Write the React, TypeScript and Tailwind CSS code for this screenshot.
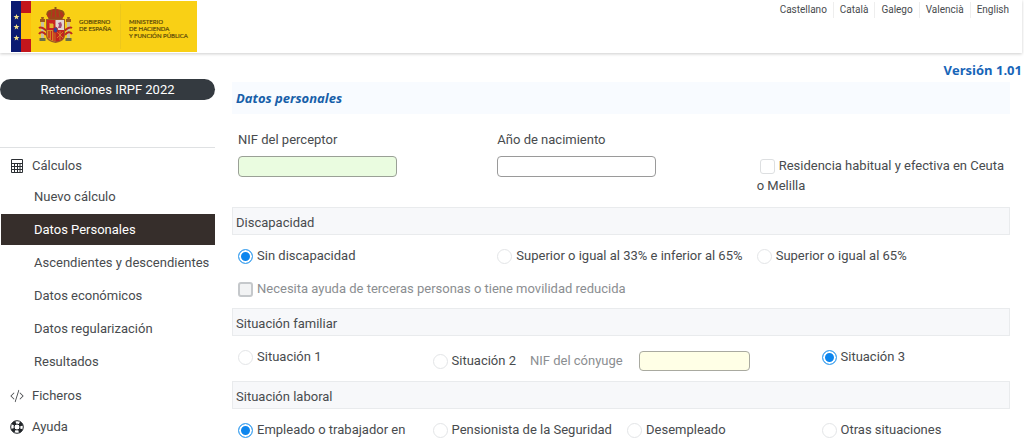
import type { ReactNode } from "react";
import { BsCodeSlash } from "react-icons/bs";

const languages = ["Castellano", "Català", "Galego", "Valencià", "English"];

const calculos = [
  "Nuevo cálculo",
  "Datos Personales",
  "Ascendientes y descendientes",
  "Datos económicos",
  "Datos regularización",
  "Resultados",
];

function Star({ y }: { y: number }) {
  return (
    <path
      transform={`translate(5.5 ${y})`}
      fill="#f4e08a"
      d="M0-3 .8-.9 3-.9 1.2.5 1.8 2.6 0 1.3-1.8 2.6-1.2.5-3-.9-.8-.9z"
    />
  );
}

function Logo() {
  return (
    <svg width="186" height="51" viewBox="0 0 186 51" role="img" aria-label="Gobierno de España">
      <rect width="186" height="51" fill="#f9d015" />
      <rect width="10" height="51" fill="#0b1a72" />
      <rect x="10" width="10" height="12" fill="#c3161c" />
      <rect x="10" y="12" width="10" height="26" fill="#fdc30c" />
      <rect x="10" y="38" width="10" height="13" fill="#c3161c" />
      <Star y={16} />
      <Star y={26} />
      <Star y={37} />

      {/* pillars */}
      <g fill="#c9bfa0">
        <rect x="30" y="20" width="3" height="18" />
        <rect x="56" y="20" width="3" height="18" />
      </g>
      <g fill="#9c5a1c">
        <path d="M29 18h5v3h-5zM55 18h5v3h-5z" />
        <path d="M30 16h3l-.5 2h-2zM56 16h3l-.5 2h-2z" />
      </g>
      <g fill="#6b7046">
        <rect x="28.500" y="37" width="6" height="3" />
        <rect x="54.500" y="37" width="6" height="3" />
      </g>
      <g fill="none" stroke="#bb2a20" strokeWidth="2">
        <path d="M28 27c3-2 5 1 8 3M28 33c2-3 5-2 7 1M61 27c-3-2-5 1-8 3M61 33c-2-3-5-2-7 1" />
      </g>
      {/* crown */}
      <path d="M36 15c-2-5 3-7 8.500-7s10.500 2 8.500 7l-2 3H38z" fill="#b3331d" />
      <path
        d="M36 14c0-4 3-5 5-4l-1 6M53 14c0-4-3-5-5-4l1 6M44.500 8v8M37 17h15"
        fill="none"
        stroke="#8a5b14"
        strokeWidth="1.200"
      />
      <path d="M43.500 6h2v3h-2z" fill="#8a5b14" />
      {/* shield */}
      <path d="M35 18h19v16c0 5-4 7-9.500 8-5.500-1-9.500-3-9.500-8z" fill="#9d5a24" />
      <path d="M36 19h8.500v10H36z" fill="#cb2420" />
      <path d="M44.500 19H53v10h-8.500z" fill="#e3d4d2" />
      <path d="M36 29h8.500v11.500C39 40 36 37 36 34z" fill="#d88b24" />
      <path d="M44.500 29H53v5c0 3-3 6-8.500 6.500z" fill="#c3221f" />
      <path d="M38 30v7M40.500 30v9M43 30v10" stroke="#c3221f" strokeWidth="1.200" />
      <path d="M38.500 27v-5h1v1h1v-1h1v1h1v4z" fill="#e4b52e" />
      <path d="M47 27l1-3-1-2 3-1 1 3-1 3z" fill="#a34c77" />
      <path d="M46 31l6 6M52 31l-6 6M49 30v9" stroke="#d99a28" strokeWidth=".7" />
      <ellipse cx="44.500" cy="29" rx="2.200" ry="2.800" fill="#33458f" stroke="#c3221f" strokeWidth=".8" />

      <path d="M109.500 3v45" stroke="#edc71c" strokeWidth="1" />
      <g fill="#5d4b0a" stroke="#5d4b0a" strokeWidth=".2" fontFamily="Lato, sans-serif" fontSize="6">
        <text x="68" y="23">GOBIERNO</text>
        <text x="68" y="30">DE ESPAÑA</text>
        <text x="118" y="23">MINISTERIO</text>
        <text x="118" y="30">DE HACIENDA</text>
        <text x="118" y="37">Y FUNCIÓN PÚBLICA</text>
      </g>
    </svg>
  );
}

function CalculatorIcon() {
  return (
    <svg width="14" height="14" viewBox="0 0 14 14" fill="none" stroke="#2b2f33" aria-hidden="true">
      <path d="M1.500 .5h11v13h-11zM1.500 4.500h11" />
      <path d="M1.500 7.500h11M1.500 10.500h11M4.500 4.500v9M7.500 4.500v9M10 4.500v9" />
    </svg>
  );
}

function LifeRingIcon() {
  return (
    <svg width="14" height="14" viewBox="0 0 14 14" fill="none" stroke="#212529" aria-hidden="true">
      <circle cx="7" cy="7" r="6.300" />
      <circle cx="7" cy="7" r="3" />
      <circle cx="7" cy="7" r="4.700" strokeWidth="3.400" strokeDasharray="3.690 3.690" strokeDashoffset="-1.850" />
    </svg>
  );
}

function SectionBar({ children }: { children: ReactNode }) {
  return (
    <h3 className="flex h-7 items-center border border-[#e9ebed] bg-[#f7f8fa] px-[3px] pt-[3px]">{children}</h3>
  );
}

type OptionProps = {
  name: string;
  label: string;
  checked?: boolean;
};

function Radio({ name, label, checked }: OptionProps) {
  return (
    <label className="flex items-center gap-1 whitespace-nowrap">
      <input
        type="radio"
        name={name}
        defaultChecked={checked}
        className="size-[15px] shrink-0 appearance-none rounded-full border border-[#e3e5e7] bg-white checked:border-[#4aa8f0] checked:bg-[#0d86ee] checked:shadow-[inset_0_0_0_2px_white]"
      />
      {label}
    </label>
  );
}

function Sidebar() {
  return (
    <aside className="w-[21%] shrink-0 pt-[25px]">
      <h1 className="flex h-[21px] items-center justify-center rounded-full bg-[#343a40] text-white">
        Retenciones IRPF 2022
      </h1>
      <nav className="mt-[47px] border-t border-[#dfe1e3] pt-2">
        <a href="#calculos" className="flex h-5 items-center gap-2 pl-[10px]">
          <CalculatorIcon />
          Cálculos
        </a>
        <ul className="flex flex-col gap-0.5 pt-[5px]">
          {calculos.map((item) => (
            <li key={item}>
              <a
                href="#datos"
                className={
                  item === "Datos Personales"
                    ? "ml-px flex h-[31px] items-center whitespace-nowrap bg-[#362e2b] pl-[33px] text-white"
                    : "ml-px flex h-[31px] items-center whitespace-nowrap pl-[33px]"
                }
              >
                {item}
              </a>
            </li>
          ))}
        </ul>
        <a href="#ficheros" className="mt-[9px] flex h-5 items-center gap-2 pl-[10px]">
          <BsCodeSlash size={14} />
          Ficheros
        </a>
        <a href="#ayuda" className="mt-[11px] flex h-5 items-center gap-2 pl-[10px]">
          <LifeRingIcon />
          Ayuda
        </a>
      </nav>
    </aside>
  );
}

export default function App() {
  return (
    <div className="bg-white font-[Roboto,'Noto_Sans',sans-serif] text-[13px] leading-5 text-[#484b4e]">
      <header className="mr-0.5 flex h-[53px] items-start justify-between pl-[11px] pr-[7px] pt-px shadow-[0_1px_3px_rgba(0,0,0,0.2)]">
        <Logo />
        <ul className="flex pt-px text-[10px] leading-4">
          {languages.map((lang) => (
            <li key={lang} className="border-l border-[#eeeeee] px-[6px] first:border-l-0">
              <a href="#idioma">{lang}</a>
            </li>
          ))}
        </ul>
      </header>

      <div className="flex pt-px">
        <Sidebar />
        <main className="ml-[17px] min-w-0 flex-1">
          <p className="pr-[2px] pt-[6px] text-right font-['Open_Sans','Noto_Sans',sans-serif] font-bold text-[#1765b8]">
            Versión 1.01
          </p>
          <form className="mr-[14px]">
            <h2 className="mt-[2px] flex h-8 items-center bg-[#f8fbff] px-1 font-['Open_Sans','Noto_Sans',sans-serif] font-bold italic text-[#175fa9]">
              Datos personales
            </h2>

            <div className="grid h-[93px] grid-cols-3 pt-4">
              <div className="pl-[6px]">
                <label htmlFor="nif" className="block">NIF del perceptor</label>
                <input
                  id="nif"
                  className="mt-[6px] block h-[21px] w-[159px] rounded border border-[#9aa096] bg-[#eafce0] px-1"
                />
              </div>
              <div className="pl-[6px]">
                <label htmlFor="nacimiento" className="block">Año de nacimiento</label>
                <input
                  id="nacimiento"
                  className="mt-[6px] block h-[21px] w-[159px] rounded border border-[#9a9a9a] bg-white px-1"
                />
              </div>
              <label className="block pl-[6px] pt-[26px]">
                <input
                  type="checkbox"
                  className="ml-[3px] mr-1 inline-block size-[15px] appearance-none rounded-[3px] border border-[#dddfe1] bg-white align-middle"
                />
                Residencia habitual y efectiva en Ceuta o Melilla
              </label>
            </div>

            <SectionBar>Discapacidad</SectionBar>
            <div className="grid grid-cols-3 pt-[11px]">
              <div className="pl-[6px]">
                <Radio name="discapacidad" label="Sin discapacidad" checked />
              </div>
              <div className="pl-[6px]">
                <Radio name="discapacidad" label="Superior o igual al 33% e inferior al 65%" />
              </div>
              <div className="pl-[6px]">
                <Radio name="discapacidad" label="Superior o igual al 65%" />
              </div>
            </div>
            <label className="mb-[9px] mt-[13px] flex items-center gap-1 pl-[6px] text-[#8b8e91]">
              <input
                type="checkbox"
                disabled
                className="size-[15px] appearance-none rounded-[3px] border-2 border-[#c5c8cb] bg-[#f2f3f4]"
              />
              Necesita ayuda de terceras personas o tiene movilidad reducida
            </label>

            <SectionBar>Situación familiar</SectionBar>
            <div className="grid h-[45px] grid-cols-4 pt-[11px]">
              <div className="pl-[6px]">
                <Radio name="familiar" label="Situación 1" />
              </div>
              <div className="col-span-2 flex items-start pl-[6px] pt-1">
                <Radio name="familiar" label="Situación 2" />
                <label htmlFor="conyuge" className="ml-[14px] whitespace-nowrap text-[#8b8e91]">
                  NIF del cónyuge
                </label>
                <input
                  id="conyuge"
                  className="ml-4 h-5 w-[111px] rounded border border-[#a9aaa0] bg-[#ffffe6] px-1"
                />
              </div>
              <div className="pl-[6px]">
                <Radio name="familiar" label="Situación 3" checked />
              </div>
            </div>

            <SectionBar>Situación laboral</SectionBar>
            <div className="grid grid-cols-4 pt-[11px]">
              <div className="pl-[6px]">
                <Radio name="laboral" label="Empleado o trabajador en" checked />
              </div>
              <div className="pl-[6px]">
                <Radio name="laboral" label="Pensionista de la Seguridad" />
              </div>
              <div className="pl-[6px]">
                <Radio name="laboral" label="Desempleado" />
              </div>
              <div className="pl-[6px]">
                <Radio name="laboral" label="Otras situaciones" />
              </div>
            </div>
          </form>
        </main>
      </div>
    </div>
  );
}
